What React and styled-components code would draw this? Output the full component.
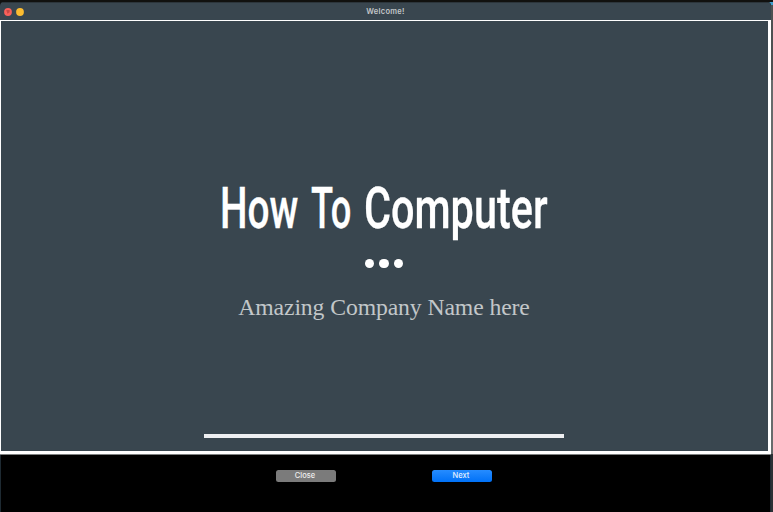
import React from "react";
import styled, { createGlobalStyle } from "styled-components";

const GlobalStyle = createGlobalStyle`
  * { box-sizing: border-box; }
  body { margin: 0; background: #000; overflow: hidden; }
`;

const Desktop = styled.div`
  width: 773px;
  height: 512px;
  padding: 2px 2px 0 0;
  background: linear-gradient(90deg, #11110f 0 416px, #202529 416px 650px, #3b3b3b 650px 722px, #253340 722px 760px, #3d9fce 770px) 0 2px / 100% 3px no-repeat,
    linear-gradient(#11110f 0 2px, #4d5152 2px 80px, #686b6c 80px 454px, #2b3135 454px);
`;

const Window = styled.main`
  display: flex;
  flex-direction: column;
  width: 771px;
  height: 510px;
  overflow: hidden;
  border-radius: 4px 4px 0 0;
  background: #000;
`;

const TitleBar = styled.header`
  display: grid;
  grid-template-columns: 60px 1fr 60px;
  flex: none;
  height: 18px;
  align-items: center;
  background: #39464f;
  border-top: 1px solid #2c353b;
`;

const Controls = styled.div`
  display: flex;
  gap: 4px;
  padding-left: 4px;
`;

const Control = styled.svg`
  display: block;
  width: 8px;
  height: 8px;
`;

const WindowTitle = styled.div`
  text-align: center;
  font: 600 7.5px/15px Inter, sans-serif;
  letter-spacing: 0.3px;
  color: #c4c8ca;
`;

const SlideFrame = styled.section`
  flex: none;
  height: 435px;
  padding: 1px 3px 3px 1px;
  background: #fff;
  border-bottom: 1px solid #7d8080;
`;

const Slide = styled.div`
  display: flex;
  flex-direction: column;
  align-items: center;
  height: 430px;
  padding: 153px 1px 0 0;
  background: #39464f;
`;

const Heading = styled.h1`
  display: flex;
  width: 328px;
  height: 68px;
  margin: 0;
  font: 500 58px/68px Roboto, sans-serif;
  -webkit-text-stroke: 0.3px #fff;
  color: #fff;
`;

const Word = styled.span`
  flex: none;
  width: ${(p) => p.$width}px;
  white-space: nowrap;

  > span {
    display: inline-block;
    transform: scaleX(${(p) => p.$scale});
    transform-origin: left;
  }
`;

const Dots = styled.div`
  display: flex;
  gap: 5px;
  margin-top: 17px;
`;

const Dot = styled.i`
  width: 9.3px;
  height: 9.3px;
  border-radius: 50%;
  background: #fff;
`;

const Subtitle = styled.p`
  margin: 24px 0 0;
  font: 23.7px/30px "Liberation Serif", serif;
  letter-spacing: -0.1px;
  color: #c2c7c9;
  white-space: nowrap;
`;

const Rule = styled.div`
  width: 360px;
  height: 4px;
  margin-top: 112px;
  background: #eeeff1;
`;

const Footer = styled.footer`
  display: flex;
  flex: 1;
  gap: 96px;
  padding: 15px 0 0 275px;
  border: solid #1e2a32;
  border-width: 0 1px 0 1px;
`;

const Button = styled.button`
  width: 60px;
  height: 12px;
  padding: 0 2px 0 0;
  border: 0;
  border-radius: 2.5px;
  background: ${(p) => (p.$primary ? "linear-gradient(#268cff, #0071f7)" : "#7b7b7b")};
  color: ${(p) => (p.$primary ? "#e5f1ff" : "#eee")};
  font: 500 7.5px/12px Inter, sans-serif;
`;

export default function App() {
  return (
    <Desktop>
      <GlobalStyle />
      <Window>
        <TitleBar>
          <Controls>
            <Control viewBox="0 0 8 8">
              <circle cx="4" cy="4" r="3.9" fill="#f9605a" />
              <path d="M2.3 2H5.6V4.3L3.4 5.8Z" fill="#c84845" />
            </Control>
            <Control viewBox="0 0 8 8">
              <circle cx="4" cy="4" r="3.9" fill="#fcbc30" />
            </Control>
          </Controls>
          <WindowTitle>Welcome!</WindowTitle>
        </TitleBar>
        <SlideFrame>
          <Slide>
            <Heading>
              <Word $width={91} $scale={0.669}><span>How</span></Word>
              <Word $width={53} $scale={0.625}><span>To</span></Word>
              <Word $width={184} $scale={0.714}><span>Computer</span></Word>
            </Heading>
            <Dots><Dot /><Dot /><Dot /></Dots>
            <Subtitle>Amazing Company Name here</Subtitle>
            <Rule />
          </Slide>
        </SlideFrame>
        <Footer>
          <Button>Close</Button>
          <Button $primary>Next</Button>
        </Footer>
      </Window>
    </Desktop>
  );
}
